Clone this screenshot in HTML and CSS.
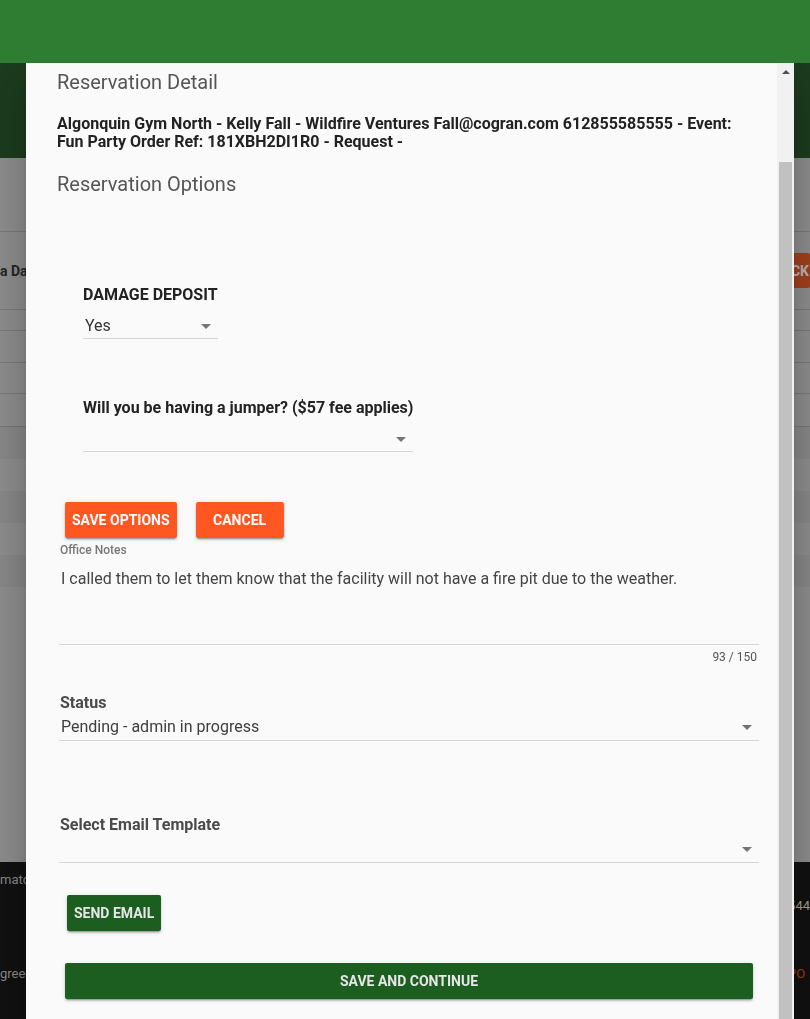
FILE: index.html
```html
<!DOCTYPE html>
<html lang="en">
<head>
  <meta charset="UTF-8">
  <meta name="viewport" content="width=device-width, initial-scale=1.0">
  <title>Reservation Detail</title>
  <link rel="stylesheet" href="styles.css">
</head>
<body>

  <header class="app-bar"></header>

  <main class="page">
    <div class="page-band"></div>
    <div class="page-table">
      <div class="row row-head"></div>
      <div class="row row-title">
        <span class="row-label">a Date</span>
        <button class="back-btn">BACK</button>
      </div>
      <div class="row row-a"></div>
      <div class="row row-b"></div>
      <div class="row row-c"></div>
      <div class="row row-d"></div>
      <div class="row row-band"></div>
      <div class="row row-band alt"></div>
      <div class="row row-band"></div>
      <div class="row row-band alt"></div>
      <div class="row row-band"></div>
      <div class="row row-band alt"></div>
    </div>
    <footer class="page-footer">
      <div class="footer-col">
        <span>match</span>
        <span>green</span>
      </div>
      <div class="footer-col right">
        <span class="footer-num">544</span>
        <span class="footer-link">PO</span>
      </div>
    </footer>
  </main>

  <div class="dialog">
    <div class="dialog-body">

      <div class="detail">
        <h3 class="section-title">Reservation Detail</h3>
        <p class="summary">Algonquin Gym North - Kelly Fall - Wildfire Ventures Fall@cogran.com 612855585555 - Event: Fun Party Order Ref: 181XBH2DI1R0 - Request -</p>
        <h3 class="section-title options-title">Reservation Options</h3>
      </div>

      <div class="options">
        <div class="field">
          <label class="field-label">DAMAGE DEPOSIT</label>
          <div class="select select-short">
            <span class="select-value">Yes</span>
            <svg class="select-arrow" viewBox="0 0 24 24" width="24" height="24"><path d="M7 10l5 5 5-5z"/></svg>
          </div>
        </div>
        <div class="field field-second">
          <label class="field-label">Will you be having a jumper? ($57 fee applies)</label>
          <div class="select select-wide">
            <span class="select-value"></span>
            <svg class="select-arrow" viewBox="0 0 24 24" width="24" height="24"><path d="M7 10l5 5 5-5z"/></svg>
          </div>
        </div>
      </div>

      <div class="option-actions">
        <button class="btn btn-orange">SAVE OPTIONS</button>
        <button class="btn btn-orange">CANCEL</button>
      </div>

      <div class="notes">
        <label class="notes-label" for="notes">Office Notes</label>
        <textarea id="notes" class="notes-input" rows="3">I called them to let them know that the facility will not have a fire pit due to the weather.</textarea>
        <div class="notes-counter">93 / 150</div>
      </div>

      <div class="admin-field status-field">
        <label class="admin-label">Status</label>
        <div class="select admin-select">
          <span class="select-value">Pending - admin in progress</span>
          <svg class="select-arrow" viewBox="0 0 24 24" width="24" height="24"><path d="M7 10l5 5 5-5z"/></svg>
        </div>
      </div>

      <div class="admin-field template-field">
        <label class="admin-label">Select Email Template</label>
        <div class="select admin-select">
          <span class="select-value"></span>
          <svg class="select-arrow" viewBox="0 0 24 24" width="24" height="24"><path d="M7 10l5 5 5-5z"/></svg>
        </div>
      </div>

      <button class="btn btn-green btn-send">SEND EMAIL</button>
      <button class="btn btn-green btn-block">SAVE AND CONTINUE</button>

    </div>
    <div class="scrollbar">
      <div class="scroll-up"></div>
      <div class="scroll-thumb"></div>
    </div>
  </div>

</body>
</html>
```

FILE: styles.css
```css
body {
  margin: 0;
  height: 100vh;
  overflow: hidden;
  font-family: Roboto, "Liberation Sans", sans-serif;
  background-color: #8f8f8f;
}

/* page behind the dialog (already dimmed by the overlay) */
.app-bar {
  position: relative;
  z-index: 3;
  height: 63px;
  background-color: #2e7d32;
}

.page-band {
  height: 95px;
  background-color: #1d3d1f;
}

.page-table {
  height: 704px;
  background-color: #8f8f8f;
}

.row {
  box-sizing: border-box;
  display: flex;
  align-items: center;
  justify-content: space-between;
  border-bottom: 1px solid #7b7b7b;
}

.row-head { height: 74px; }
.row-title { height: 78px; }
.row-a { height: 21px; }
.row-b { height: 32px; }
.row-c { height: 31px; }
.row-d { height: 33px; }

.row-band {
  height: 32px;
  border-bottom: none;
  background-color: #8a8a8a;
}

.row-band.alt {
  background-color: #8f8f8f;
}

.row-label {
  font-size: 14px;
  font-weight: bold;
  color: #262626;
  white-space: nowrap;
}

.back-btn {
  height: 35px;
  padding: 0 1px 0 16px;
  border: none;
  border-radius: 2px;
  background-color: #a3411f;
  color: #b9b9b9;
  font-family: inherit;
  font-size: 14px;
  font-weight: bold;
}

.page-footer {
  display: flex;
  justify-content: space-between;
  height: 157px;
  background-color: #111;
  font-size: 13px;
}

.footer-col {
  display: flex;
  flex-direction: column;
  gap: 79px;
  padding-top: 10px;
  color: #8c8c8c;
}

.footer-col.right {
  gap: 53px;
  padding-top: 36px;
}

.footer-num { color: #a9a592; }
.footer-link { color: #a33c1a; }

/* dialog */
.dialog {
  position: fixed;
  z-index: 2;
  top: 63px;
  bottom: 0;
  left: 26px;
  width: 768px;
  display: flex;
  background-color: #fafafa;
  box-shadow: 0 11px 15px -7px rgba(0,0,0,0.2), 0 24px 38px 3px rgba(0,0,0,0.14), 0 9px 46px 8px rgba(0,0,0,0.12);
}

.dialog-body {
  flex: 1;
  overflow: hidden;
}

.scrollbar {
  width: 17px;
  display: flex;
  flex-direction: column;
  align-items: center;
  background-color: #f1f1f1;
}

.scroll-up {
  height: 17px;
  width: 17px;
  display: flex;
  align-items: center;
  justify-content: center;
}

.scroll-up::before {
  content: "";
  border-left: 4px solid transparent;
  border-right: 4px solid transparent;
  border-bottom: 4px solid #505050;
}

.scroll-thumb {
  flex: 1;
  width: 13px;
  margin-top: 82px;
  background-color: #c1c1c1;
}

.detail {
  padding: 7px 24px 0 31px;
}

.section-title {
  margin: 0;
  font-size: 20px;
  line-height: 24px;
  font-weight: normal;
  color: #555;
}

.summary {
  margin: 21px 0 0;
  font-size: 16px;
  line-height: 1.15;
  font-weight: bold;
  color: #222;
}

.options-title {
  margin-top: 20px;
}

.options {
  padding: 89px 0 0 57px;
}

.field-second {
  margin-top: 59px;
}

.field-label {
  display: block;
  font-size: 16px;
  line-height: 20px;
  font-weight: bold;
  color: #222;
}

.select {
  display: flex;
  align-items: center;
  justify-content: space-between;
  height: 20px;
  margin-top: 11px;
  padding-bottom: 2px;
  border-bottom: 1px solid #d6d6d6;
}

.select-short { width: 135px; }
.select-wide { width: 330px; }

.select-value {
  padding-left: 2px;
  font-size: 16px;
  line-height: 20px;
  color: #333;
}

.select-arrow {
  flex-shrink: 0;
  fill: #757575;
}

.option-actions {
  display: flex;
  gap: 19px;
  margin-top: 50px;
  padding-left: 39px;
}

.btn {
  display: block;
  height: 36px;
  min-width: 88px;
  padding: 0 7px;
  border: none;
  border-radius: 2px;
  font-family: inherit;
  font-size: 14px;
  font-weight: bold;
  box-shadow: 0 3px 1px -2px rgba(0,0,0,0.2), 0 2px 2px 0 rgba(0,0,0,0.14), 0 1px 5px 0 rgba(0,0,0,0.12);
  cursor: pointer;
}

.btn-orange {
  background-color: #ff5722;
  color: #fff;
}

.btn-green {
  background-color: #1b5e20;
  color: #e6e6e6;
}

.notes {
  margin: 5px 18px 0 33px;
}

.notes-label {
  display: block;
  padding-left: 1px;
  font-size: 12px;
  line-height: 14px;
  font-weight: 500;
  color: #777;
}

.notes-input {
  display: block;
  box-sizing: border-box;
  width: 100%;
  height: 78px;
  margin-top: 10px;
  padding: 0 2px;
  border: none;
  border-bottom: 1px solid #d6d6d6;
  background: transparent;
  resize: none;
  outline: none;
  font-family: inherit;
  font-size: 16px;
  line-height: 24px;
  color: #444;
}

.notes-counter {
  margin-top: 5px;
  padding-right: 2px;
  text-align: right;
  font-size: 12px;
  line-height: 14px;
  color: #555;
}

.admin-field {
  margin: 0 18px 0 33px;
}

.status-field { margin-top: 29px; }
.template-field { margin-top: 74px; }

.admin-label {
  display: block;
  padding-left: 1px;
  font-size: 16px;
  line-height: 20px;
  font-weight: bold;
  color: #4a4a4a;
}

.admin-select {
  margin-top: 4px;
  padding-bottom: 3px;
}

.admin-select .select-value {
  color: #3d3d3d;
}

.btn-send {
  margin: 32px 0 0 41px;
}

.btn-block {
  width: 688px;
  margin: 32px 0 0 39px;
}
```
